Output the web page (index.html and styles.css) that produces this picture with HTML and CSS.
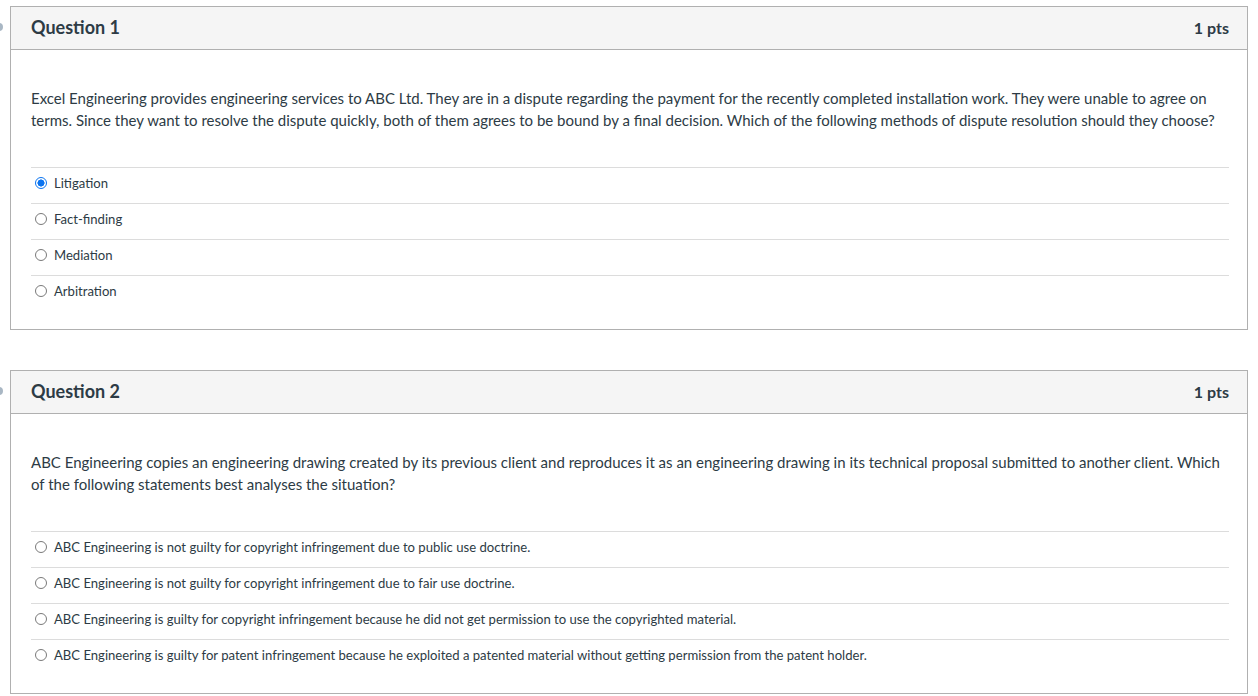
FILE: index.html
```html
<!DOCTYPE html>
<html>
<head>
<meta charset="utf-8">
<link rel="stylesheet" href="styles.css">
</head>
<body>
<div class="page">
  <div class="qwrap">
    <span class="nub"></span>
    <div class="question">
      <div class="qhead">
        <span class="qtitle">Question 1</span>
        <span class="qpts">1 pts</span>
      </div>
      <div class="qbody">
        <p class="qtext">Excel Engineering provides engineering services to ABC Ltd. They are in a dispute regarding the payment for the recently completed installation work. They were unable to agree on terms. Since they want to resolve the dispute quickly, both of them agrees to be bound by a final decision. Which of the following methods of dispute resolution should they choose?</p>
        <div class="answers">
          <label class="answer"><span class="radio checked"></span>Litigation</label>
          <label class="answer"><span class="radio"></span>Fact-finding</label>
          <label class="answer"><span class="radio"></span>Mediation</label>
          <label class="answer"><span class="radio"></span>Arbitration</label>
        </div>
      </div>
    </div>
  </div>
  <div class="qwrap">
    <span class="nub"></span>
    <div class="question">
      <div class="qhead">
        <span class="qtitle">Question 2</span>
        <span class="qpts">1 pts</span>
      </div>
      <div class="qbody">
        <p class="qtext">ABC Engineering copies an engineering drawing created by its previous client and reproduces it as an engineering drawing in its technical proposal submitted to another client. Which of the following statements best analyses the situation?</p>
        <div class="answers">
          <label class="answer"><span class="radio"></span>ABC Engineering is not guilty for copyright infringement due to public use doctrine.</label>
          <label class="answer"><span class="radio"></span>ABC Engineering is not guilty for copyright infringement due to fair use doctrine.</label>
          <label class="answer"><span class="radio"></span>ABC Engineering is guilty for copyright infringement because he did not get permission to use the copyrighted material.</label>
          <label class="answer"><span class="radio"></span>ABC Engineering is guilty for patent infringement because he exploited a patented material without getting permission from the patent holder.</label>
        </div>
      </div>
    </div>
  </div>
</div>
</body>
</html>
```

FILE: styles.css
```css
* { box-sizing: border-box; }
html, body { margin: 0; padding: 0; background: #fff; }
body {
  font-family: Lato, "Open Sans", "Liberation Sans", sans-serif;
  color: #2d3b45;
}
.page {
  padding: 6px 10px 0 10px;
  display: flex;
  flex-direction: column;
  gap: 40px;
}
.qwrap { position: relative; }
.nub {
  position: absolute;
  left: -13px;
  top: 17px;
  width: 6px;
  height: 8px;
  border-radius: 0 4px 4px 0;
  background: #a9b7c4;
}
.question {
  border: 1px solid #b0b0b0;
}
.qhead {
  background: #f5f5f5;
  border-bottom: 1px solid #b0b0b0;
  height: 43px;
  display: flex;
  align-items: center;
  justify-content: space-between;
  padding: 0 18px 2px 20px;
}
.qtitle { font-size: 18px; font-weight: 700; color: #2d3b45; }
.qpts { font-size: 16px; font-weight: 700; color: #2d3b45; }
.qbody { padding: 37px 18px 18px 20px; }
.qtext {
  margin: 0 0 36px 0;
  font-size: 15px;
  line-height: 22px;
  color: #2d3b45;
}
.answers { display: flex; flex-direction: column; }
.answer {
  display: flex;
  align-items: center;
  height: 36px;
  padding: 0 0 5px 4px;
  border-top: 1px solid #dcdcdc;
  font-size: 13.1px;
  color: #2d3b45;
}
.radio {
  width: 12px;
  height: 12px;
  border: 1px solid #7a7a7a;
  border-radius: 50%;
  margin-right: 7px;
  flex: none;
  background: #fff;
}
.radio.checked {
  border: 1px solid #0b74f0;
  background: radial-gradient(circle, #0b74f0 0 3.3px, #fff 3.8px);
}
```
